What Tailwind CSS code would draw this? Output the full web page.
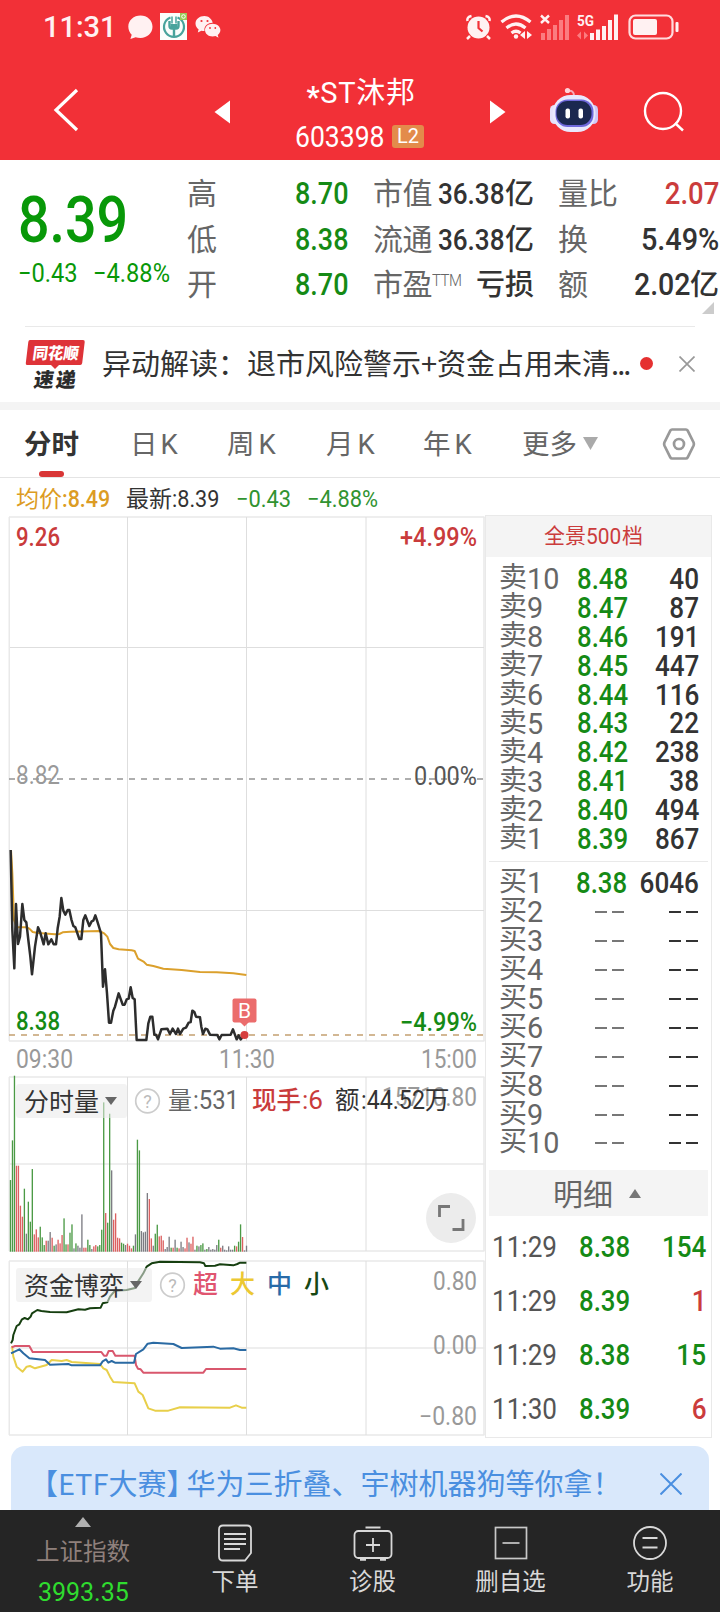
<!DOCTYPE html>
<html lang="zh-CN">
  <head>
    <meta charset="UTF-8" />
    <meta name="viewport" content="width=device-width, initial-scale=1.0" />
    <script src="https://cdn.jsdelivr.net/npm/@tailwindcss/browser@4"></script>
    <title>*ST沐邦 603398</title>
  </head>
  <body class="w-[720px] h-[1612px] overflow-hidden bg-white font-['Roboto','Noto_Sans_CJK_SC',sans-serif] text-[#333]">
    <!-- header -->
    <header class="h-40 bg-[#f23037] text-white">
      <div class="flex h-[53px] items-center justify-between pl-[43px] pr-[41px]">
        <div class="flex items-center">
          <span class="w-[85px] pt-[2px] text-[29px] font-medium leading-none text-[#fff1f2]">11:31</span>
          <svg class="w-[25px] h-[26px] mr-[7px]" viewBox="0 0 25 26" fill="#fff1f2"><path d="M12.500 1.500C5.800 1.500.3 6.300.3 12.500c0 3.700 1.600 6.500 3.400 8.300L2.400 25l5.200-1.800c1.500.5 3.100.7 4.900.7 6.700 0 12-4.800 12-11.200S19.200 1.500 12.500 1.500z"/></svg>
          <svg class="w-[27px] h-[27px] mr-[8px]" viewBox="0 0 27 27" fill="none"><rect width="27" height="27" fill="#fbfdfc"/><path d="M10.500 4.500a10 10 0 1 0 7 0" stroke="#49a39c" stroke-width="2.200"/><path d="M9.500 8v5q0 2.500 2.500 2.500h4q2.500 0 2.500-2.500V8M14 14v10" stroke="#49a39c" stroke-width="2.400"/><path d="M12 3.500v7M16 3.500v7" stroke="#49a39c" stroke-width="1.500"/><path d="M10.500 11h7v5h-7z" fill="#49a39c"/><rect x="20" width="7" height="7" fill="#9cc85a"/><circle cx="23.500" cy="3.500" r="1.800" stroke="#fff"/></svg>
          <svg class="w-[26px] h-[24px]" viewBox="0 0 26 24" fill="#fff1f2"><path d="M9.500 1C4.400 1 .5 4.300.5 8.500c0 2.400 1.200 4.400 3.100 5.800L2.800 17.500l3.600-1.800c1 .3 2 .4 3.100.4l-.1-1.300c0-4 3.600-7 8.300-7C16.800 3.800 13.500 1 9.500 1z"/><path d="M17.600 8.700c-4.300 0-7.600 2.800-7.600 6.400s3.300 6.500 7.600 6.500c1 0 2-.2 2.900-.5l3 1.700-.8-2.800c1.600-1.200 2.700-2.900 2.700-4.900 0-3.600-3.500-6.400-7.800-6.400z"/><g fill="#f23037"><circle cx="6.500" cy="6" r="1.100"/><circle cx="12.500" cy="6" r="1.100"/><circle cx="15" cy="13" r=".9"/><circle cx="20.300" cy="13" r=".9"/></g></svg>
        </div>
        <svg class="w-[214px] h-[30px]" viewBox="465 12 214 30" fill="#fff1f2">
          <circle cx="478.500" cy="27.500" r="11"/><path d="M470 36l-3 3M487 36l3 3M467.500 21q-1-4 4-5M489.500 21q1-4-4-5" stroke="#fff1f2" stroke-width="2.500" fill="none"/><path d="M478.500 21v7l4 3.500" stroke="#f23037" stroke-width="2.200" fill="none"/>
          <path d="M501.500 22q14.500-12 29 0M506.500 28q9.500-8 19 0M511.500 33q4.500-3.500 9 0" stroke="#fff1f2" stroke-width="3.200" fill="none"/><circle cx="516" cy="36.500" r="2.200"/><path d="M520 35l5-4v8zM532 35l-5-4v8z"/>
          <path d="M541 15.500l8 7.500M549 15.500l-8 7.500" stroke="#fff1f2" stroke-width="2.400"/>
          <g fill="#fb7c80"><rect x="541" y="33" width="4" height="7"/><rect x="547" y="29" width="4" height="11"/><rect x="553" y="25" width="4" height="15"/><rect x="559" y="20" width="4" height="20"/><rect x="565" y="15" width="4" height="25"/><path d="M577 35.500l4-4v8zM588 35.500l-4-4v8z"/></g>
          <text x="577" y="26" font-size="15.500" font-weight="700" textLength="17" lengthAdjust="spacingAndGlyphs">5G</text>
          <rect x="590" y="33" width="4" height="7"/><rect x="596" y="29.500" width="4" height="10.500"/><rect x="602" y="26" width="4" height="14"/><rect x="608" y="20" width="4" height="20"/><rect x="614" y="14.500" width="4" height="25.500"/>
          <rect x="629.500" y="15.500" width="43" height="23" rx="6" fill="none" stroke="#ffdcde" stroke-width="2.200"/><rect x="633" y="19" width="24" height="16" rx="2"/><rect x="675.500" y="22" width="3" height="10" rx="1"/>
        </svg>
      </div>
      <div class="flex h-[107px] pl-[50px]">
        <svg class="mt-[34px] w-[32px] h-[46px]" viewBox="0 0 32 46" fill="none" stroke="#fff" stroke-width="3.200"><path d="M27 3L6 23l21 20"/></svg>
        <svg class="ml-[132px] mt-[47px] w-4 h-6" viewBox="0 0 16 24" fill="#fff"><path d="M16 .5v23L.5 12z"/></svg>
        <div class="flex w-[260px] flex-col items-center">
          <h1 class="mt-[22px] pl-[2px] text-[29px] leading-9 tracking-[0.700px]"><span class="inline-block translate-y-[4px] font-bold">*</span>ST沐邦</h1>
          <div class="mt-[9px] flex items-center">
            <span class="-ml-px w-[94px] origin-left scale-x-90 text-[29.500px] leading-[34px]">603398</span>
            <span class="-mt-[2px] ml-[3px] h-[23px] w-8 rounded-[3px] bg-[#e38b4b] text-center text-[20px] leading-[22px]">L2</span>
          </div>
        </div>
        <svg class="mt-[47px] w-4 h-6" viewBox="0 0 16 24" fill="#fff"><path d="M0 .5v23L15.500 12z"/></svg>
        <svg class="ml-[43px] mt-[34px] w-[50px] h-[46px]" viewBox="549 87 50 46">
          <path d="M568 91q6-1 6 5" fill="none" stroke="#f7a9b8" stroke-width="2"/><circle cx="567.500" cy="90.500" r="2.600" fill="#ffd3da"/>
          <rect x="550" y="105" width="9" height="19" rx="4.500" fill="#e4e1fa"/><rect x="589" y="105" width="9" height="19" rx="4.500" fill="#cfc9f8"/>
          <rect x="552.500" y="95" width="43" height="37" rx="18" fill="#e9e8fd"/><rect x="555.500" y="99.500" width="38" height="27.500" rx="12" fill="#6f69dc"/><rect x="556.500" y="101" width="35" height="24" rx="11" fill="#1b2850"/>
          <rect x="565.500" y="108.500" width="4.500" height="10" rx="2" fill="#fff"/><rect x="578.500" y="108.500" width="4.500" height="10" rx="2" fill="#fff"/>
        </svg>
        <svg class="ml-[43px] mt-[36px] w-[44px] h-[44px]" viewBox="642 89 44 44" fill="none" stroke="#fff" stroke-width="2.400"><circle cx="663" cy="111" r="18"/><path d="M675 123l8 7.500"/></svg>
      </div>
    </header>

    <!-- quote -->
    <section class="flex h-[166px] pt-3">
      <div class="w-[187px] pl-[18px] text-[#089808]">
        <div class="mt-[12px] h-[72px] origin-left scale-x-[0.855] text-[65px] font-medium leading-[72px]">8.39</div>
        <div class="mt-[1px] flex h-[32px] text-[26px] leading-8">
          <span class="w-[75px] origin-left scale-x-[0.910]">−0.43</span>
          <span class="origin-left scale-x-[0.910]">−4.88%</span>
        </div>
      </div>
      <div class="grid h-[137px] w-[533px] grid-cols-[161px_25px_161px_24px_161px] grid-rows-3 text-[30px] leading-[44px] text-[#666]">
        <div class="flex justify-between"><span>高</span><span class="origin-right scale-x-[0.870] text-[31px] font-medium text-[#158a15]">8.70</span></div><i></i>
        <div class="flex justify-between"><span class="tracking-[-0.500px]">市值</span><span class="flex text-[#333]"><b class="-ml-4 origin-right scale-x-[0.870] text-[30px] font-medium">36.38</b><b class="text-[29px] font-medium">亿</b></span></div><i></i>
        <div class="flex justify-between"><span>量比</span><span class="origin-right scale-x-[0.890] text-[31px] font-medium text-[#cb3c3c]">2.07</span></div>

        <div class="flex justify-between"><span>低</span><span class="origin-right scale-x-[0.870] text-[31px] font-medium text-[#158a15]">8.38</span></div><i></i>
        <div class="flex justify-between"><span class="tracking-[-0.500px]">流通</span><span class="flex text-[#333]"><b class="-ml-4 origin-right scale-x-[0.870] text-[30px] font-medium">36.38</b><b class="text-[29px] font-medium">亿</b></span></div><i></i>
        <div class="flex justify-between"><span>换</span><span class="origin-right scale-x-[0.930] text-[31px] font-medium text-[#333]">5.49%</span></div>

        <div class="flex justify-between"><span>开</span><span class="origin-right scale-x-[0.870] text-[31px] font-medium text-[#158a15]">8.70</span></div><i></i>
        <div class="flex justify-between"><span class="flex tracking-[-0.500px]">市盈<span class="-mt-[5px] w-[28px] origin-left scale-x-[0.880] text-[17px] font-light">TTM</span></span><b class="text-[29px] font-medium text-[#333]">亏损</b></div><i></i>
        <div class="flex justify-between"><span>额</span><span class="flex text-[#333]"><b class="origin-right scale-x-[0.920] text-[31px] font-medium">2.02</b><b class="text-[29px] font-medium">亿</b></span></div>
      </div>
      <svg class="absolute left-[702px] top-[302px] w-3 h-3" viewBox="0 0 12 12" fill="#ccc"><path d="M12 0v12H0z"/></svg>
    </section>

    <!-- news line -->
    <section class="mx-[25px] flex h-[76px] items-center border-t border-[#e9e9e9]">
      <svg class="w-[60px] h-[50px]" viewBox="25 340 60 50" font-family="Noto Sans CJK SC" font-weight="900" text-anchor="middle">
        <path d="M30 340h53q2 0 1.700 2l-2.500 21q-.3 2-2 2H59l-4 4-4-4H27q-1.500 0-1.200-2l2.500-21q.2-2 1.700-2z" fill="#de3338"/>
        <text transform="translate(55 358.500) skewX(-8)" font-size="16" textLength="46" lengthAdjust="spacingAndGlyphs" fill="#fff">同花顺</text>
        <text transform="translate(54 386.500) skewX(-8)" font-size="20" textLength="42" fill="#2b2b2b">速递</text>
      </svg>
      <p class="-mt-[5px] ml-[17px] w-[536px] whitespace-nowrap font-['Noto_Sans_CJK_SC',sans-serif] text-[29px] leading-10">异动解读：退市风险警示+资金占用未清<span class="tracking-[-2px]">...</span></p>
      <i class="ml-[2px] -mt-[2px] size-[13px] rounded-full bg-[#e53030]"></i>
      <svg class="-mt-[2px] ml-[26px] w-4 h-4" viewBox="0 0 16 16" stroke="#999" stroke-width="1.700"><path d="M.5.500l15 15M15.500.500l-15 15"/></svg>
    </section>
    <div class="h-2 bg-[#f4f4f4]"></div>

    <!-- period tabs -->
    <nav class="flex h-[68px] items-center border-b border-[#e4e4e4] pl-[24px] pr-[24px] text-[27.500px] text-[#666]">
      <div class="relative w-[106px] pt-[3px] font-bold text-[#333]">分时<i class="absolute left-[15px] top-[50px] h-[6px] w-[25px] rounded-full bg-[#d93636]"></i></div>
      <div class="flex w-[97px] gap-[3px] pt-[3px]">日<span>K</span></div>
      <div class="flex w-[99px] gap-[4px] pt-[3px]">周<span>K</span></div>
      <div class="flex w-[97px] gap-[4px] pt-[3px]">月<span>K</span></div>
      <div class="flex w-[99px] gap-[4px] pt-[3px]">年<span>K</span></div>
      <div class="flex items-center gap-[6px] pt-[3px]">更多<svg class="-mt-[3px] w-[15px] h-[13px]" viewBox="0 0 15 13" fill="#aaa"><path d="M0 0h15L7.500 13z"/></svg></div>
      <svg class="ml-auto w-[34px] h-[34px]" viewBox="0 0 34 34" fill="none" stroke="#999" stroke-width="2.700"><path d="M10 2.500h14q1 0 1.600 1l6 12q.6 1.500 0 3L25.600 30.500q-.6 1-1.600 1H10q-1 0-1.600-1l-6-12q-.6-1.500 0-3L8.400 3.500Q9 2.500 10 2.500z"/><circle cx="17" cy="17" r="5"/></svg>
    </nav>

    <div class="flex h-[37px] items-center pl-[16px] pt-[6px] text-[23px] leading-[37px]">
      <div class="flex w-[110px] text-[#dc9c24]">均价<span class="origin-left scale-x-[0.930] font-medium">:8.49</span></div>
      <div class="flex w-[110px]">最新<span class="origin-left scale-x-[0.940]">:8.39</span></div>
      <span class="w-[71px] origin-left scale-x-[0.950] text-[#319331]">−0.43</span>
      <span class="origin-left scale-x-[0.950] text-[#319331]">−4.88%</span>
    </div>

    <main class="flex h-[931px]">
      <!-- minute, volume and capital charts -->
      <svg class="w-[485px] h-[925px]" viewBox="0 515 485 925" fill="none">
        <g stroke="#e9e9e9" stroke-width="1.500">
          <path d="M9 517H484.500M9 1041H484.500M9 1077H484.500M9 1164H484.500M9 1251H484.500M9 1261H484.500M9 1348H484.500M9 1435H484.500" />
          <path d="M9.250 517V1041M484 517V1041M9.250 1077V1251M484 1077V1251M9.250 1261V1435M484 1261V1435"/>
        </g>
        <path d="M10 647.500H484M10 910.500H484M127.500 517V1041M246.500 517V1041M366 517V1041M127.500 1077V1251M246.500 1077V1251M366 1077V1251M127.500 1261V1435M246.500 1261V1435M366 1261V1435" stroke="#dedede"/>
        <path d="M9 779H483" stroke="#949494" stroke-width="1.600" stroke-dasharray="6 6"/>
        <path d="M9 1035H483" stroke="#c3a070" stroke-width="1.600" stroke-dasharray="6 6"/>

        <g transform="translate(0 760) scale(.33333)" stroke-linejoin="round">
          <polyline stroke="#dba02c" stroke-width="6" points="33,270 37,340 42,480 50,502 80,502 88,506 98,516 115,519 145,521 165,523 178,522 188,517 210,515 300,513 312,520 322,530 330,552 340,564 356,568 395,571 404,573 414,596 432,606 440,614 460,618 490,626 545,630 600,636 650,637 700,640 739,645"/>
          <polyline stroke="#2d2d2d" stroke-width="7.500" points="32,270 37,510 43,625 48,432 54,552 60,530 67,432 73,480 79,487 85,540 91,590 96,643 105,560 114,502 120,515 131,553 137,520 145,553 154,538 161,553 168,553 173,505 179,470 184,414 190,452 196,464 203,450 208,450 214,478 220,498 226,502 238,537 244,537 250,480 256,466 268,498 275,484 280,482 286,466 292,484 300,510 303,520 309,680 315,628 321,700 327,788 333,788 340,752 345,740 356,700 368,734 374,734 380,718 386,716 392,682 398,714 404,718 407,780 410,840 439,840 445,790 451,770 457,770 463,824 468,824 474,838 484,808 502,806 510,822 518,806 528,822 534,806 540,822 550,806 558,803 566,788 572,786 577,752 583,756 588,770 600,772 604,800 609,822 616,806 622,808 630,824 652,825 658,838 665,825 692,824 699,808 710,838 716,826 722,838 733,825"/>
        </g>
        <rect x="232.500" y="998.500" width="24" height="24" rx="2" fill="#eb6c6c"/><path d="M240 1022h9l-4.500 4.500z" fill="#eb6c6c"/>
        <circle cx="244.500" cy="1035" r="4" fill="#d63e3e"/>

        <g id="volume" transform="translate(0 1251.700) scale(.33333)"></g>

        <g transform="translate(0 1060) scale(.33333)" stroke-width="6" stroke-linejoin="round">
          <polyline stroke="#e8cf4a" points="36,858 40,890 50,920 68,935 80,920 90,918 105,925 140,915 155,900 185,903 200,900 215,906 300,912 310,925 320,930 330,950 340,966 404,970 415,995 428,1005 445,1045 465,1052 505,1052 540,1042 690,1043 708,1036 725,1043 739,1043"/>
          <polyline stroke="#d9576d" points="35,862 45,858 88,858 98,876 304,876 312,887 320,887 326,873 338,873 346,887 404,887 408,915 414,926 422,928 430,938 610,938 618,927 739,927"/>
          <polyline stroke="#2a6aa3" points="33,880 58,868 70,880 88,895 135,900 150,914 205,912 215,916 300,916 308,904 318,898 325,908 335,903 345,908 402,908 408,882 430,868 443,851 460,848 520,852 545,864 640,860 660,866 700,865 720,870 739,870"/>
          <polyline stroke="#163f10" points="33,850 38,840 40,825 50,798 58,793 66,778 74,774 84,778 92,770 96,760 112,750 124,753 150,756 200,757 235,748 255,749 270,745 302,743 308,730 322,727 330,710 345,692 380,690 405,684 412,668 430,640 440,620 455,610 480,605 600,607 612,610 616,618 645,617 660,613 700,616 712,612 720,608 739,608"/>
        </g>

        <rect x="16" y="1084" width="111" height="34" rx="3" fill="#e9e9e9" fill-opacity=".55"/>
        <rect x="16" y="1268" width="136" height="34" rx="3" fill="#e9e9e9" fill-opacity=".55"/>
        <path d="M105 1097h12l-6 8zM130 1281h12l-6 8z" fill="#666"/>
        <g stroke="#ccc" stroke-width="1.700"><circle cx="147.500" cy="1101" r="11.800"/><circle cx="172.500" cy="1285" r="11.800"/></g>
        <circle cx="451" cy="1218" r="25" fill="#ececec"/>
        <path d="M439.500 1217v-10.500H450M463 1219v10.500H452.500" stroke="#777" stroke-width="2.800"/>

        <g font-size="26" fill="#999">
          <text x="16" y="784" font-size="25" textLength="44" lengthAdjust="spacingAndGlyphs">8.82</text>
          <text x="16" y="1067.500" textLength="57" lengthAdjust="spacingAndGlyphs">09:30</text>
          <text x="219" y="1067.500" textLength="56" lengthAdjust="spacingAndGlyphs">11:30</text>
          <text x="421" y="1067.500" textLength="56" lengthAdjust="spacingAndGlyphs">15:00</text>
          <text x="382" y="1105.500" font-size="25" textLength="95" lengthAdjust="spacingAndGlyphs">15710.80</text>
          <text x="433" y="1289.500" font-size="25" textLength="44" lengthAdjust="spacingAndGlyphs">0.80</text>
          <text x="433" y="1353.500" font-size="25" textLength="44" lengthAdjust="spacingAndGlyphs">0.00</text>
          <text x="419" y="1424.500" font-size="25" textLength="58" lengthAdjust="spacingAndGlyphs">−0.80</text>
        </g>
        <g font-size="25" font-weight="500">
          <text x="16" y="545.500" fill="#c93b3b" textLength="44" lengthAdjust="spacingAndGlyphs">9.26</text>
          <text x="400" y="545.500" fill="#c93b3b" textLength="77" lengthAdjust="spacingAndGlyphs">+4.99%</text>
          <text x="414" y="784.500" fill="#555" font-weight="400" textLength="63" lengthAdjust="spacingAndGlyphs">0.00%</text>
          <text x="16" y="1030" fill="#158a15" textLength="44" lengthAdjust="spacingAndGlyphs">8.38</text>
          <text x="400" y="1030.500" fill="#158a15" textLength="77" lengthAdjust="spacingAndGlyphs">−4.99%</text>
          <text x="238" y="1018" fill="#fff" font-size="21" font-weight="400">B</text>
        </g>
        <g font-size="25" fill="#333">
          <text x="24" y="1111">分时量</text>
          <text x="24" y="1295">资金博弈</text>
          <g fill="#bbb" font-size="18" text-anchor="middle"><text x="147.500" y="1107.500">?</text><text x="172.500" y="1291.500">?</text></g>
          <text x="168" y="1109" font-size="24" fill="#666">量</text><text x="193" y="1109" fill="#666" textLength="46" lengthAdjust="spacingAndGlyphs">:531</text>
          <text x="252" y="1109" font-size="24.500" fill="#c93b3b" font-weight="500">现手</text><text x="302" y="1109" fill="#c93b3b" textLength="21" lengthAdjust="spacingAndGlyphs">:6</text>
          <text x="335" y="1109" font-size="24.500">额</text><text x="361" y="1109" textLength="64" lengthAdjust="spacingAndGlyphs">:44.52</text><text x="425" y="1109" font-size="24.500">万</text>
          <g font-weight="500"><text x="193" y="1293" fill="#e05570">超</text><text x="230" y="1293" fill="#ecc832">大</text><text x="267" y="1293" fill="#286ba8">中</text><text x="304" y="1293" fill="#174814">小</text></g>
        </g>
      </svg>

      <!-- order book -->
      <aside class="flex h-[923px] w-[227px] flex-col border border-[#e9e9e9]">
        <div class="flex h-[41px] bg-[#f4f4f4] pl-[58px] text-[21px] leading-[41px] text-[#cb3c3c]">全景<span class="w-[36px] origin-left scale-x-95 text-[22px]">500</span>档</div>
        <div id="asks" class="mt-[8px] h-[289px]"></div>
        <div class="mx-[3px] mt-[7px] border-t border-[#e9e9e9]"></div>
        <div id="bids" class="mt-[7px] h-[289px]"></div>
        <div class="mx-[3px] mt-[12px] flex h-[46px] items-center justify-center gap-4 bg-[#f4f4f4] pr-[3px] text-[30px] leading-none text-[#666]"><span class="pt-[3px]">明细</span><svg class="w-3 h-[9px]" viewBox="0 0 12 9" fill="#777"><path d="M0 9h12L6 0z"/></svg></div>
        <div id="ticks" class="mt-[4px]"></div>
      </aside>
    </main>

    <!-- promo -->
    <section class="mx-[11px] flex h-16 items-center justify-between rounded-t-[14px] bg-[#d9e8fb] pl-[18px] pr-[27px] pt-3 font-['Noto_Sans_CJK_SC',sans-serif] text-[29px] leading-none text-[#4a8fe0]">
      <p class="-mt-[3px] whitespace-nowrap"><span class="-mr-[9px]">【ETF大赛】</span>华为三折叠、宇树机器狗等你拿！</p>
      <svg class="w-[22px] h-[22px]" viewBox="0 0 22 22" stroke="#4a8fe0" stroke-width="2"><path d="M.5.500l21 21M21.500.500l-21 21"/></svg>
    </section>

    <footer class="flex h-[102px] bg-[#252525] text-[23.500px] leading-7 text-[#d8d8d8]">
      <div class="flex w-[166px] flex-col items-center pt-[7px] text-[#8f807c]">
        <svg class="w-4 h-[10px]" viewBox="0 0 16 10" fill="#b0b0b0"><path d="M0 10h16L8 0z"/></svg>
        <span class="mt-[11px]">上证指数</span>
        <span class="mt-[12px] scale-x-[0.980] text-[25.500px] text-[#2fdc2f]">3993.35</span>
      </div>
      <div class="flex w-[138px] flex-col items-center pt-[14px]">
        <svg class="w-[34px] h-[38px]" viewBox="0 0 34 38" fill="none" stroke="#d8d8d8" stroke-width="1.800"><path d="M5 1.500h24q4 0 4 4V29l-6 7.500H5q-4 0-4-4v-27q0-4 4-4zM6 10h22M6 15h22M6 20h22M6 25h16"/></svg>
        <span class="mt-[6px]">下单</span>
      </div>
      <div class="flex w-[137px] flex-col items-center pt-[14px]">
        <svg class="w-[40px] h-[38px]" viewBox="0 0 40 38" fill="none" stroke="#d8d8d8" stroke-width="1.800"><rect x="1.500" y="7" width="37" height="27" rx="4"/><path d="M12.500 3.500h15M20 14v14M13 21h14"/><path d="M7 35.500h6M27 35.500h6" stroke-width="2.500"/></svg>
        <span class="mt-[6px]">诊股</span>
      </div>
      <div class="flex w-[139px] flex-col items-center pt-[14px]">
        <svg class="w-[34px] h-[38px]" viewBox="0 0 34 38" fill="none" stroke="#c8c8c8" stroke-width="1.700"><rect x="1.500" y="3.500" width="31" height="31"/><path d="M8.500 19h17"/></svg>
        <span class="mt-[6px]">删自选</span>
      </div>
      <div class="flex w-[140px] flex-col items-center pt-[14px]">
        <svg class="w-[36px] h-[38px]" viewBox="0 0 36 38" fill="none" stroke="#d8d8d8" stroke-width="1.800"><circle cx="18" cy="19" r="16"/><path d="M10.500 14h15M10.500 23.500h15"/></svg>
        <span class="mt-[6px]">功能</span>
      </div>
    </footer>

    <script>
      const askQty = [40, 87, 191, 447, 116, 22, 238, 38, 494, 867]
      const row = (label, n, price, qty, has) => `
        <div class="flex h-[28.900px] items-center pl-[13px] pr-[12px] text-[28px] leading-none">
          <span class="flex w-[78px] text-[#666]">${label}<span class="origin-left scale-x-[0.960] text-[30px]">${n}</span></span>
          ${has
            ? `<span class="w-[58px] origin-left scale-x-[0.890] text-[29px] font-medium text-[#158a15]">${price}</span><span class="ml-auto origin-right scale-x-[0.900] text-[29px] font-medium">${qty}</span>`
            : `<span class="ml-[18px] flex gap-[5px]"><i class="h-[2px] w-[12px] bg-[#777]"></i><i class="h-[2px] w-[12px] bg-[#777]"></i></span><span class="ml-auto mr-[1px] flex gap-[5px]"><i class="h-[2px] w-[12px] bg-[#333]"></i><i class="h-[2px] w-[12px] bg-[#333]"></i></span>`}
        </div>`
      document.getElementById("asks").innerHTML = askQty.map((q, i) => row("卖", 10 - i, (8.48 - i / 100).toFixed(2), q, true)).join("")
      document.getElementById("bids").innerHTML = askQty.map((q, i) => row("买", i + 1, "8.38", 6046, i === 0)).join("")

      const ticks = [["11:29", "8.38", 154, "g"], ["11:29", "8.39", 1, "r"], ["11:29", "8.38", 15, "g"], ["11:30", "8.39", 6, "r"]]
      document.getElementById("ticks").innerHTML = ticks.map(([t, p, n, c]) => `
        <div class="flex h-[54px] items-center pl-[6px] pr-[5px] text-[29px] leading-none">
          <span class="w-[87px] origin-left scale-x-[0.900] text-[#555]">${t}</span>
          <span class="origin-left scale-x-[0.890] font-medium text-[#158a15]">${p}</span>
          <span class="${c === "g" ? "ml-auto origin-right scale-x-[0.900] font-medium text-[#158a15]" : "ml-auto origin-right scale-x-[0.900] font-medium text-[#cb3c3c]"}">${n}</span>
        </div>`).join("")

      // one bar per minute: height + colour key
      const bars = "215g 334g 528g 258r 258r 138r 105r 189g 54k 150g 90g 248g 52r 67r 43r 75g 43g 20g 33r 33k 59k 42r 18g 22k 36r 25r 50r 100g 22g 22r 57g 82g 10k 25g 18k 12k 112k 12r 12r 36g 20g 8k 16r 20r 16g 20g 66g 448g 116r 87g 414g 244k 96r 115r 42r 40r 27g 24g 20k 24r 18r 10r 18g 52k 336g 304g 62k 58k 60k 176k 158r 40r 18k 54g 81g 46r 48r 34r 8k 14k 45k 12g 12r 36k 12g 10r 30k 14k 10r 42r 28k 24r 45r 6k 18g 16k 20g 25g 6k 8g 14k 6k 8k 6k 20k 36g 12r 18k 6k 4k 16k 6k 6k 18g 16r 30g 82g 44r 4k 18k".split(" ")
      const colors = { g: "#4b9a45", r: "#dc6060", k: "#7c7c82" }
      document.getElementById("volume").innerHTML = bars.map((b, i) => {
        const h = parseInt(b)
        return `<rect x="${29.500 + 5.950 * i}" y="${-h}" width="4" height="${h}" fill="${colors[b.slice(-1)]}"/>`
      }).join("")
    </script>
  </body>
</html>
